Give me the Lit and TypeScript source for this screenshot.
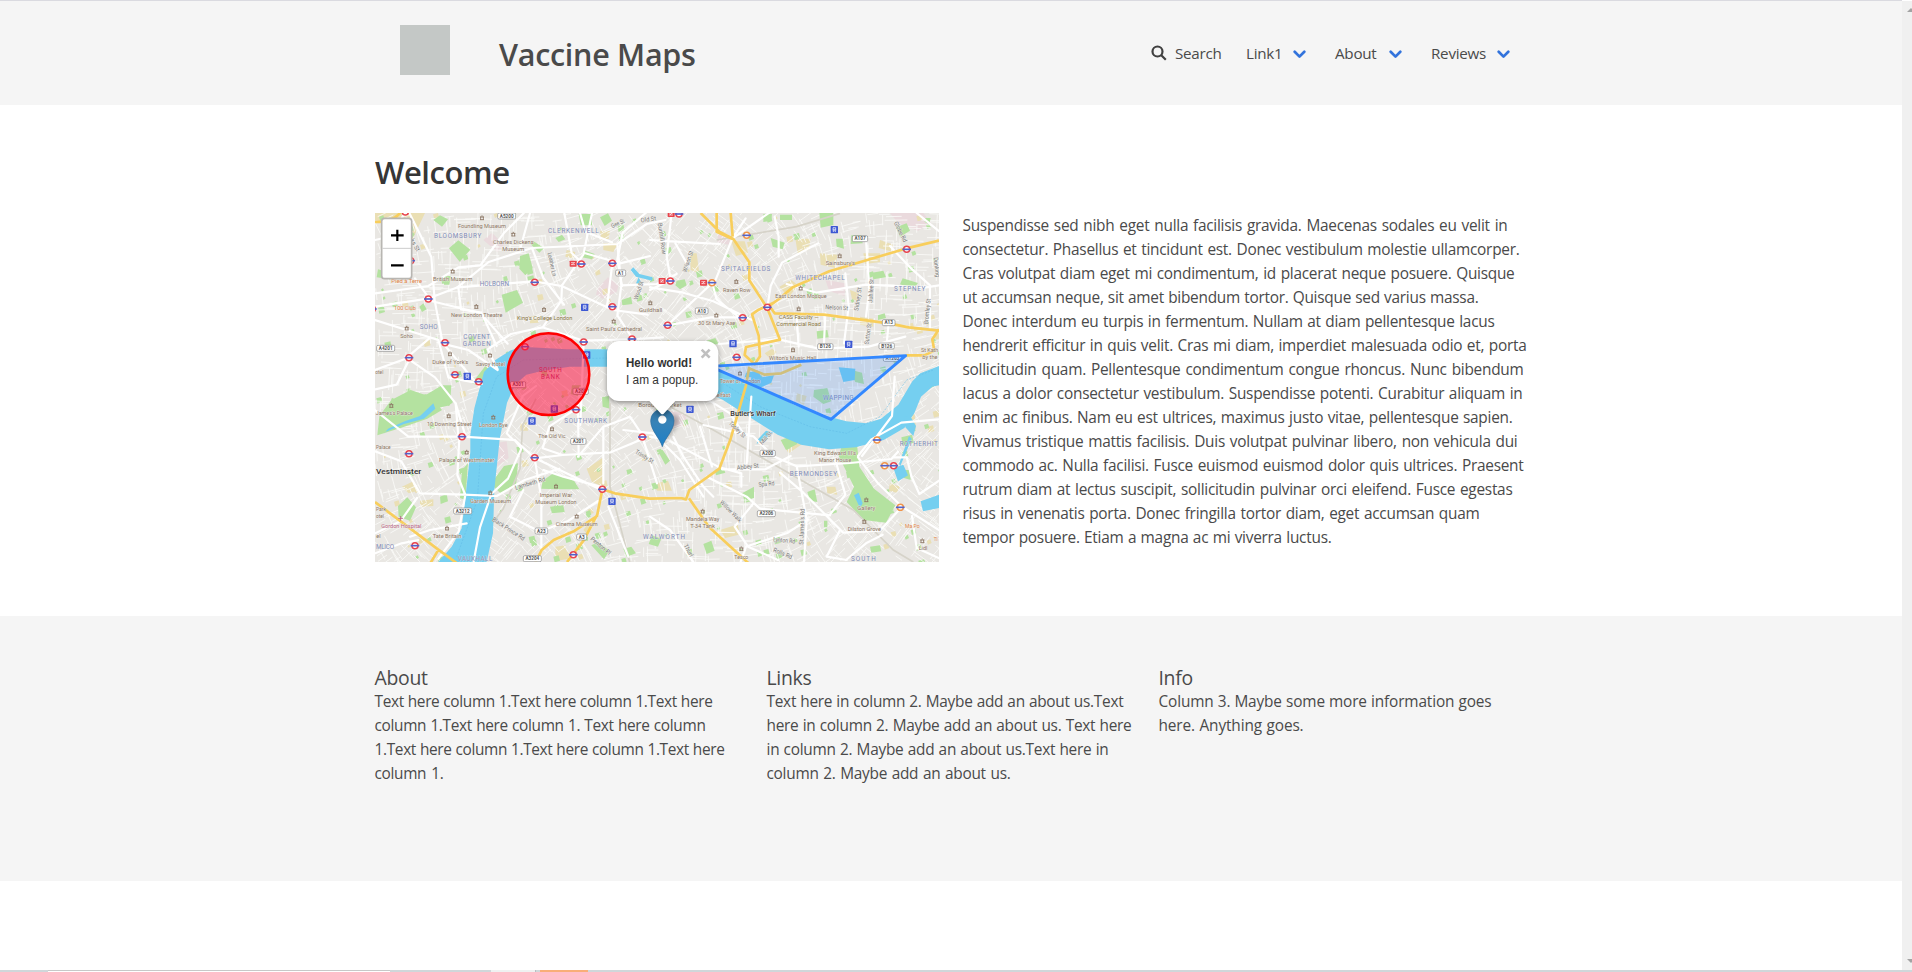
import { LitElement, html, svg, css } from "lit";
import { customElement } from "lit/decorators.js";

type Label = [number, number, string, number, string?, number?];

// Map drawing units: three per CSS pixel. Text entries: centre x, baseline y, text, width, class, angle.
const labels: Label[] = [
  [336, 53, "Foundling Museum", 144], [430, 102, "Charles Dickens", 122], [430, 124, "Museum", 66],
  [248, 214, "British Museum", 118], [320, 320, "New London Theatre", 154], [524, 329, "King's College London", 166, "olive"],
  [732, 364, "Saint Paul's Cathedral", 168], [842, 307, "Guildhall", 70], [110, 384, "Soho", 38],
  [241, 463, "Duke of York's", 108], [361, 467, "Savoy Hotel", 88], [110, 219, "Pied à Terre", 92, "orange"],
  [105, 300, "100 Club", 66, "orange"], [28, 492, "otel", 24],
  [263, 85, "BLOOMSBURY", 142, "area"], [610, 69, "CLERKENWELL", 152, "area"], [373, 227, "HOLBORN", 88, "area"],
  [176, 358, "SOHO", 54, "area"], [320, 386, "COVENT", 80, "area"], [320, 407, "GARDEN", 84, "area"],
  [541, 487, "SOUTH", 68, "area bank"], [541, 508, "BANK", 56, "area bank"],
  [540, 164, "Leather Ln", 72, "street", 78], [812, 243, "Wood St", 56, "street", -72], [746, 46, "Gee St", 42, "street", -24],
  [836, 34, "Old St", 46, "street", -8], [130, 108, "ks St", 40, "street", 60],
  [1127, 184, "SPITALFIELDS", 148, "area"], [1350, 209, "WHITECHAPEL", 148, "area"], [1619, 242, "STEPNEY", 94, "area"],
  [1411, 166, "Sainsbury's", 88], [1100, 245, "Raven Row", 82], [1293, 265, "East London Mosque", 154],
  [1286, 326, "CASS Faculty —", 120, "olive"], [1286, 347, "Commercial Road", 134, "olive"],
  [1040, 345, "30 St Mary Axe", 112], [1268, 450, "Wilton's Music Hall", 142], [1110, 519, "Tower of London", 122],
  [1400, 299, "Nelson St", 68, "street", 3], [1679, 427, "St Kath", 52], [1680, 448, "by the", 46],
  [870, 86, "Bunhill Row", 94, "street", 82], [960, 156, "Wilson St", 66, "street", -72],
  [1470, 268, "Sidney St", 70, "street", -82], [1509, 243, "Jubilee St", 70, "street", -86],
  [1500, 372, "Sutton St", 64, "street", -82], [1586, 68, "Globe Rd", 66, "street", 64],
  [1678, 305, "Bromley St", 78, "street", -84], [1694, 172, "Dunking", 60, "street", 84],
  [73, 616, "James's Palace", 112], [238, 647, "10 Downing Street", 134], [370, 651, "London Eye", 86],
  [546, 685, "The Old Vic", 82], [40, 718, "Palace", 44], [290, 756, "Palace of Westminster", 166],
  [86, 793, "Vestminster", 136, "town"], [558, 861, "Imperial War", 98], [558, 882, "Museum London", 124],
  [362, 879, "Garden Museum", 122], [620, 949, "Cinema Museum", 126], [94, 954, "Gordon Hospital", 120, "rose"],
  [231, 984, "Tate Britain", 86], [33, 903, "Park", 30], [30, 924, "otel", 24], [25, 983, "el", 13],
  [647, 638, "SOUTHWARK", 128, "area"], [45, 1018, "MLICO", 54, "area"], [315, 1052, "VAUXHALL", 104, "area"],
  [882, 987, "WALWORTH", 126, "area"], [482, 826, "Lambeth Rd", 94, "street", -17],
  [412, 962, "Black Prince Rd", 112, "street", 33], [688, 1012, "Penton Pl", 74, "street", 40],
  [820, 745, "Trinity St", 60, "street", 32], [870, 592, "Borough Market", 130],
  [1036, 562, "HMS Belfast", 90], [1149, 617, "Butler's Wharf", 136, "town"], [1405, 570, "WAPPING", 92, "area"],
  [1395, 734, "King Edward III's", 126], [1395, 755, "Manor House", 98], [1330, 798, "BERMONDSEY", 142, "area"],
  [1646, 708, "ROTHERHIT", 114, "area"], [1489, 899, "Gallery", 54], [1483, 964, "Dilston Grove", 100],
  [1627, 954, "Ma Po", 44, "orange"], [1697, 992, "Tl", 12, "orange"], [1659, 1021, "Lidl", 26], [998, 933, "Mandela Way", 100],
  [998, 954, "T-34 Tank", 74], [1114, 1046, "Tesco", 42], [1098, 663, "Tooley St", 62, "street", 44],
  [1192, 688, "Mill St", 46, "street", -48], [1134, 776, "Abbey St", 66, "street", -6], [1190, 828, "Spa Rd", 48, "street", -6],
  [1078, 908, "Willow Walk", 84, "street", 45], [1302, 950, "St James's Rd", 108, "street", -88],
  [1242, 997, "Lynton Rd", 66, "street", 6], [1236, 1036, "Rolls Rd", 60, "street", 22],
  [950, 1024, "Thurl", 40, "street", 62], [1480, 1053, "SOUTH", 74, "area"],
];

const shields: [number, number, string][] = [
  [410, 18, "A5200"], [752, 189, "A1"], [47, 415, "A4201"], [444, 524, "A301"], [632, 544, "A201"], [995, 303, "A10"],
  [1470, 86, "A107"], [1556, 338, "A13"], [1366, 410, "B126"], [1550, 408, "B126"], [1567, 445, "A1203"],
  [625, 694, "A201"], [278, 903, "A3212"], [514, 963, "A23"], [635, 981, "A3"], [487, 1046, "A3204"],
  [1193, 730, "A200"], [1189, 911, "A2206"],
];

const tubes: [number, number][] = [
  [106, 6], [634, 162], [727, 160], [494, 217], [175, 267], [727, 290], [225, 398], [117, 443], [465, 410], [641, 396],
  [786, 387], [255, 494], [326, 515], [122, 152], [7, 297], [927, 12], [901, 213], [893, 346], [1118, 323], [1192, 292], [1100, 442],
  [1610, 118], [276, 680], [117, 731], [618, 599], [817, 681], [494, 743], [697, 838], [135, 1007], [610, 1034], [1571, 767],
];
const overground: [number, number][] = [[1130, 76], [1026, 218], [1521, 690], [1544, 767], [1591, 892]];
const railRed: [number, number][] = [[609, 161], [876, 213], [1000, 218], [903, 12]];
const stops: [number, number][] = [
  [644, 292], [650, 435], [292, 499], [486, 633], [553, 597], [726, 874], [1393, 59], [1089, 401], [1436, 403], [960, 598],
];
const pois: [number, number][] = [
  [336, 24], [430, 73], [248, 184], [319, 290], [522, 299], [731, 334], [841, 279], [110, 355], [240, 432], [360, 436],
  [1099, 215], [1292, 235], [1409, 138], [1286, 297], [1039, 316], [1269, 420], [1110, 490], [64, 587], [236, 618],
  [370, 622], [546, 657], [290, 727], [558, 829], [361, 849], [620, 919], [231, 955], [998, 904], [1114, 1017],
  [1489, 870], [1483, 935], [1657, 993],
];

const parks = [
  "M190 30l20-14 24 12-18 22zM237 115l28-24 36 28-32 36zM118 60l16 12-10 18-14-8z",
  "M450 138l26-8 12 44-22 22-18-20zM488 92l34 22-14 14-24-24zM395 254l46-14 18 38-52 30z",
  "M626 12h40v34h-34zM690 22l24-12 12 22-22 16zM640 120l34 12-8 16-30-6zM148 290l12-10 10 18-14 8zM306 520l40-52 16 14-28 48z",
  "M24 178l40 12-4 18-40-6zM222 198l20 0-4 26-16 0zM755 270l28-10 4 22-30 4zM556 84l20-10 10 14-20 8z",
  "M1230 14h36v16h-36zM1348 9h42v36l-38 8zM1180 12l26 0-2 20-24 4zM1444 76h30l4 24-36 2zM1578 52l32-12 10 22-30 18z",
  "M920 212l24-4 6 18-20 12-14-12zM1506 188l34-6 8 20-38 6zM1598 205l46 14-14 18-40-14zM1340 364l32-4 4 22-34 4zM1398 86l20 0 4 30-22-6z",
  "M1202 84l42 14-6 20-30-8zM1666 24l16 0-4 18-14-6zM1524 316l20-6 4 14-24 6zM1010 392l26-8 10 18-34 4zM1436 478l40 10 6 34-26-6z",
  "M28 618l36-48 58-30 64 22 30 38-44 26-80 28-70 22zM166 556l50-30 28 0-4 60-48 10z",
  "M84 888l28-26 26 30-18 40-34-12zM276 780l18-20-8 110-16-6zM362 822l40-54 42-8-6 68-44 24z",
  "M518 812l34-24 60 24 16 26-66 0-48-2zM606 526l30 0-4 34-30-8zM696 562l20-4 4 38-22-6zM862 720l16 0 22 32-14 12z",
  "M1406 738l14-44 40-2 8 78 44 66 64 50-28 52-66-8-52-54 22-46z",
  "M1332 540l40-6 12 40-24 8-30-22zM1232 690l40-14 10 26-34 18zM1112 852l40-22 0 34-22 6zM1312 846l22-8 8 38-22-4zM1000 1002l24-10 10 30-24 10zM1034 780l26-8 6 16-28 8z",
  "M210 860l20-8 4 22-22 8zM226 546l24 26-14 16-20-18zM664 1006l20-10 34 26-16 26zM760 1016l24-6 14 20-28 10zM640 980l14 0 0 12-12 0zM1594 682l32-8 6 24-34 8zM1600 780l18 0 4 30-20-6z",
  "M846 976l28 10-10 24-28-8zM1190 900l18-6 6 20-20 6zM1362 932l10 0 0 20-10 0zM1500 1010l30-4 4 18-30 4zM540 890l40-4 4 20-38 4z",
];
const sand = [
  "M15 9h150l-40 84-48-54-62-8zM690 62l30 0-4 24-22 4zM700 100h44l-14 26-30-6z",
  "M1084 94l40 0 10 34-36 10zM1276 86h46l-6 34-34 4zM1350 130l52 4-6 40-44-10zM1480 130h50v26l-44 6zM960 130l20 0 8 60-26-10z",
  "M1228 230l36-20 20 16-28 36zM1470 320l40 6 0 24-40-6zM1530 90l40 14-8 20-36-10zM1440 240l26 10 0 22-20-4z",
  "M650 776l50-34 0 88-34-14zM640 960l30-40 6 12-22 42zM96 830l34-16 14 28-28 8zM150 872l40-4 0 20-40 2zM450 642l20-6 4 26-22 0z",
  "M1236 698l40-18 24 20-44 30zM1280 550l30 8-8 26-24-12zM846 822l48-10 12 30-44 0zM1050 960l38-12 18 26-40 10zM1604 620l30-8 4 44-28-4zM1560 820l30 10-10 18-24-6z",
  "M556 1010l30-4 10 40-40 8zM1370 830l26 0 6 24-30-4zM480 320l20-4 6 22-26 2zM590 120l26 6-4 20-26-6zM1184 430l22-14 14 10-20 20z",
];
const pink = [
  "M340 90l26-22 36 36-20 22zM684 232l30-30 32 24-6 20-42 20-20-12zM376 700l34-6 6 50-50 36-8-10z",
  "M1560 9h100l24 30-40 24-60-24zM1366 210l60 10-2 38-46-14zM878 600l64 8 14 36-70 16zM1044 70l40 8-8 26-34-8z",
];

const mainRoads = [
  "M15 90l45-10 44-70M118 9l66 132 10 130 24 128 110 130M15 250l160-22 90-56 66-6 70-96 60-60M135 205l48 68 148 36 82 92M15 290l158-24 90-34 228-18 84 14 154 72 104 14",
  "M262 232l94-76 92-30 32-116M265 232l8 66 60 10M356 156l130-42 256-12 88-60 56-12M486 114l34 90 62 80M576 226l64-92 26-124M646 130l104 30 90-22M742 102l12 124 106-4 60-30M754 226l-12 90 46 70 40 40",
  "M756 228l-14-80 16-80 70-60M15 330l190 60 30 112 100 20M205 398l90 22 88 60M383 478l-30-60 70-46 94-20 124 40 146-4 92-6M334 308l46 100M518 352l56-80 2-46M641 395l-10 250",
  "M105 440l90 62 62 78 30 100M15 480l92-34 70-60M120 444l-40 80-65 14M583 9l22 120 36 34M727 160l-16 130M630 9l16 56 80 32",
  "M840 90l66 4 144 8M906 0l-16 140 12 70-62 30M840 232l100 16 90 26 116 56M1026 218l14 50 70 56M893 345l144-136 50-124 40-60M1088 85l120-84M1214 20l12 60 0 60M893 346l130-24 94 0M916 100l40 70",
  "M1192 292l10-64 34-70 108-58M1250 222l90 26 148-24 180 8 39-6M1560 108l60 64 60 54 0 130M1488 90l10 150-10 80M1426 190l10 100-14 110M1046 402l180-14 120 28 150-6 110-30M1280 320l6 90M1640 9l66 54M1556 340l-8 80M1366 310l-4 90",
  "M257 580l8 100-150 0-100-80M150 850l130 4 100 4 84-48 104-34M276 680l158 10 20 26-40 90-50 46-34 100-20 108M268 685l-6 110 24 60M150 850l-56-96-79-30M286 855l-20 110-60 80M120 980l60-20 110-20",
  "M430 690l-20 -20 48-112 40-30M434 690l60 54 196 94M494 745l20 120 0 150M494 745l84-10 144-8 96-40M578 735l-60-20 20-66 86-56 6-60M624 590l2 150M624 740l76-90 80-30 40 60M700 650l0 170M520 780l60 20 110 30",
  "M15 970l76-36 50-70M15 1030l80-30 50-10M460 840l-40 80 100 50M514 963l80-30 90-60M715 890l60 150M760 660l90 10 80 80 70 110M817 680l44 140",
  "M840 680l54 10 150 80 70 20 0 40M990 650l36 120M1000 560l80 50 40 60M1000 645l150 34 60 60 70 30 160-10 124-12 20-22M1144 560l-14 200M1056 778l130 0 76-40M1010 800l120 60 40 36 210 20",
  "M1280 768l30 160-8 130M1476 738l90-120 8-118M1464 742l60 78 72 70 111 70M1596 890l-66 72-110 6-120-120-70-60M1410 960l-40 80 60 10M1380 914l46-60-30-104M1464 738l40-50 90-50 112-10",
  "M1570 742l40 0 14 56 24 54 59-40M1150 880l-56 70 40 60 90 40M1134 1008l120-40 60-40M840 920l60 40 70 96M1130 1005l-18 50M1626 918l14 96 66 30M1428 1050l60-50 50-26M1030 860l-30-30-60-90-30-60",
];
const yellowRoads = [
  "M15 36q60 0 78-32M992 9l56 56 42 22 48 70 0 54 54 84 38 94-102 22-4 24 30 28 16-24-4-62-20-64 20-14 48-22M1040 9l0 56 48 22M1088 80l-6-71M1192 292q40-26 76-60l110-48 228-68 101-24",
  "M1200 290l14 20 148 4 194 26 60 12 91 10M1707 358l-20 30 6 34-30 14-56 0M1140 476l44 18 50-4 60-26",
  "M1138 470l-10 56-46 160-34 90-90 64-10 28-16-4-92 2-106-16-36-12M957 865l60 86 120 110M697 838l-16 80-70 46-60 26-36 30-20 40M681 915l-40 76-50 65M15 876l186 140 60 44M206 1018l-24 40",
];
const railways = "M840 500l60 90 130 70 420 240 120 120 60 36M320 1056l20-80 60-80 50-120 8-130 40-80M720 580l0 250 60 230M1040 90l240-40 130-40";

// Deterministic residential street mesh.
function mesh(): string {
  let seed = 41;
  const rnd = () => (seed = (seed * 16807) % 2147483647) / 2147483647;
  let d = "";
  for (let gx = 0; gx < 24; gx++) {
    for (let gy = 0; gy < 15; gy++) {
      const turn = -0.45 + Math.sin(gx * 0.35 + gy * 0.25) * 0.5;
      for (let k = 0; k < 7; k++) {
        const x = 15 + (gx + rnd()) * 71;
        const y = 9 + (gy + rnd()) * 71;
        const a = turn + (rnd() > 0.5 ? Math.PI / 2 : 0);
        const n = 20 + rnd() * 50;
        d += `M${x.toFixed(0)} ${y.toFixed(0)}l${(Math.cos(a) * n).toFixed(0)} ${(Math.sin(a) * n).toFixed(0)}`;
      }
    }
  }
  return d;
}

// Small squares and gardens scattered between the streets.
function greens(start: number, count: number): string {
  let seed = start;
  const rnd = () => (seed = (seed * 16807) % 2147483647) / 2147483647;
  let d = "";
  for (let i = 0; i < count; i++) {
    const w = 5 + rnd() * 13;
    d += `M${(15 + rnd() * 1690).toFixed(0)} ${(9 + rnd() * 1045).toFixed(0)}l${w.toFixed(0)} -4l4 ${w.toFixed(0)}l-${w.toFixed(0)} 5z`;
  }
  return d;
}

@customElement("street-map")
class StreetMap extends LitElement {
  static styles = css`
    :host { display: block; width: 564px; height: 349px; overflow: hidden; }
    svg { display: block; width: 564px; height: 349px; }
    .land { fill: #e9e7e3; }
    .mesh { stroke: #fafaf8; stroke-width: 2.8; fill: none; opacity: 0.9; }
    .park { fill: #b4e2a0; }
    .sand { fill: #eadfb4; }
    .pink { fill: #eadadd; }
    .water { fill: #75cff0; }
    .rail { stroke: #d6d3c9; stroke-width: 5; fill: none; }
    .road { stroke: #fff; stroke-width: 6.5; fill: none; stroke-linejoin: round; stroke-linecap: round; }
    .major { stroke: #f8ce5c; stroke-width: 8; fill: none; stroke-linejoin: round; }
    .ferry { stroke: #5fb9e4; stroke-width: 1.5; stroke-dasharray: 6 4; fill: none; }
    text { font-family: Roboto, "Open Sans", sans-serif; font-size: 18.5px; fill: #8b7563; text-anchor: middle; }
    .name { paint-order: stroke; stroke: #f2f0ec; stroke-width: 2px; }
    .area { fill: #808bb8; font-size: 19px; stroke-width: 1px; }
    .bank { fill: #b33f76; stroke: none; }
    .street { fill: #777; }
    .orange { fill: #e08346; }
    .olive { fill: #85733e; }
    .rose { fill: #b65f83; }
    .town { fill: #333; font-size: 24px; font-weight: 500; }
    .shield { fill: #fff; stroke: #888; stroke-width: 2; }
    .num { font-size: 14px; font-weight: 700; fill: #555; }
    .tube { fill: #fff; stroke: #e9444e; stroke-width: 4.5; }
    .over { fill: #fff; stroke: #f0944a; stroke-width: 4.5; }
    .bar { fill: #5463c8; }
    .red { fill: #e8434b; }
    .stop { fill: #3d58d3; }
    .glyph { fill: none; stroke: #fff; stroke-width: 2; }
    .poi { fill: none; stroke: #8a7463; stroke-width: 2.6; }
    .cross { stroke: #b65f83; }
    .tri { fill: #38f; fill-opacity: 0.2; stroke: #3388ff; stroke-width: 8.5; stroke-linejoin: round; }
    .circle { fill: #f03; fill-opacity: 0.5; stroke: #f00; stroke-width: 7.5; }
    .popup { fill: #fff; filter: drop-shadow(0 5px 8px rgba(0, 0, 0, 0.4)); }
    .msg { font-family: "Liberation Sans", Arial, sans-serif; font-size: 36px; fill: #333; text-anchor: start; }
    .strong { font-weight: 700; }
    .close { stroke: #c0c0c0; stroke-width: 8; fill: none; }
    .ctl { fill: #fff; stroke: #b8b6b2; stroke-width: 5; }
    .split { stroke: #ccc; stroke-width: 3; }
    .sign { stroke: #000; stroke-width: 6.5; fill: none; }
  `;

  render() {
    return html`<svg viewBox="15 9 1692 1047" role="img" aria-label="Map">
      <defs>
        <linearGradient id="pin" x1="0" y1="0" x2="0" y2="1">
          <stop offset="0" stop-color="#2e6c97"></stop><stop offset=".35" stop-color="#3883b7"></stop><stop offset="1" stop-color="#1e80c8"></stop>
        </linearGradient>
        <filter id="soft" x="-50%" y="-50%" width="200%" height="200%"><feGaussianBlur stdDeviation="7"></feGaussianBlur></filter>
      </defs>
      <rect class="land" x="15" y="9" width="1692" height="1047"></rect>
      ${sand.map((d) => svg`<path class="sand" d=${d}></path>`)}
      ${pink.map((d) => svg`<path class="pink" d=${d}></path>`)}
      <path class="sand" d=${greens(5501, 90)}></path>
      <path class="park" d=${greens(977, 230)}></path>
      <path class="mesh" d=${mesh()}></path>
      ${parks.map((d) => svg`<path class="park" d=${d}></path>`)}
      <path class="rail" d=${railways}></path>
      <path class="water" d="M205 1056l40-46 30-55 12-100 14-130 0-50 12-80 17-65 12-44 34-36 44-28 32-12 138 8 115 0 170 12 170 46 40 20 100 44 90 46 94 32 60 16 60 6 44-14 52-42 42-70 24-24 56-22 30 0v52l-50 10-34 30-20 50-30 44-62 36-84 22-80 6-84-14-70-30-74-46-90-58-110-52-80-22-120-26-150 0-80 12-50 12-34 30-24 54-22 110-16 152-4 130-20 90-42 84z"></path>
      <path class="water" d="M40 674l14-18 50-22 46-16 40-38 6 16-34 30-60 16-56 24zM790 172l18 20 40 10-2 10-48-12-16-20zM806 202l-8 18 20 6zM1128 488l34-6 14 20 36-6-8 22-34 16-30-10 4-22-20 0zM1604 618l20 6 14 24-8 30-24-26zM1617 678l8 8-34 82-4-6zM1570 774l30-10 14 32-30 18zM1652 874l55-20v40l-48 10zM1452 856l14-8 12 32-8 14zM1210 668l-50 34 4-14 24-26zM1406 472l50 4-2 34-34 6z"></path>
      <path class="ferry" d="M260 1040l62-170 18-260 40-110 80-50 250-6M1060 520l110 70 150 60 110 20 100-50 80-110 80-30"></path>
      ${mainRoads.map((d) => svg`<path class="road" d=${d}></path>`)}
      ${yellowRoads.map((d) => svg`<path class="major" d=${d}></path>`)}
      ${pois.map(([x, y]) => svg`<path class="poi" d=${`M${x - 6} ${y - 3}h12M${x - 6} ${y + 5}h12M${x - 4} ${y - 4}v9M${x + 4} ${y - 4}v9M${x - 2} ${y - 6}h4`}></path>`)}
      <path class="poi cross" d="M92 918v14M85 925h14"></path>
      ${labels.map(
        ([x, y, t, w, c, r]) => svg`<text class=${"name " + (c ?? "")} x=${x} y=${y} textLength=${w} lengthAdjust=${c?.startsWith("area") ? "spacing" : "spacingAndGlyphs"} transform=${`rotate(${r ?? 0} ${x} ${y})`}>${t}</text>`,
      )}
      ${shields.map(([x, y, t]) => {
        const w = t.length * 8 + 14;
        return svg`<rect class="shield" x=${x - w / 2} y=${y - 9} width=${w} height="18" rx="4"></rect><text class="num" x=${x} y=${y + 5}>${t}</text>`;
      })}
      ${tubes.map(([x, y]) => svg`<circle class="tube" cx=${x} cy=${y} r="9"></circle><rect class="bar" x=${x - 13} y=${y - 2.5} width="26" height="5"></rect>`)}
      ${overground.map(([x, y]) => svg`<circle class="over" cx=${x} cy=${y} r="9"></circle><rect class="bar" x=${x - 13} y=${y - 2.5} width="26" height="5"></rect>`)}
      ${railRed.map(([x, y]) => svg`<rect class="red" x=${x - 10} y=${y - 9} width="21" height="18" rx="2"></rect><path class="glyph" d=${`M${x - 6} ${y - 3}h12M${x - 6} ${y + 3}h12M${x - 3} ${y + 3}l6 -6`}></path>`)}
      ${stops.map(([x, y]) => svg`<rect class="stop" x=${x - 11} y=${y - 11} width="22" height="22" rx="2"></rect><path class="glyph" d=${`M${x - 4} ${y - 6}h8v9h-8zM${x - 4} ${y - 1}h8M${x - 4} ${y + 7}l2-3M${x + 4} ${y + 7}l-2-3`}></path>`)}
      <path class="tri" d="M1020 469L1607 437 1383 628z"></path>
      <circle class="circle" cx="535.5" cy="492.5" r="122.5"></circle>
      <path d="M880 706l40-56q16-20 2-32t-34 12z" fill="#000" opacity=".26" filter="url(#soft)"></path>
      <path d="M877 710C871 686 842 662 842 632a35 35 0 0 1 70 0C912 662 883 686 877 710z" fill="url(#pin)" stroke="#2c6d9f" stroke-width="2"></path>
      <circle cx="877" cy="629" r="12.5" fill="#fff"></circle>
      <path class="popup" d="M747 393H1009a36 36 0 0 1 36 36V537a36 36 0 0 1-36 36H916L881 611q-4 4-8 0L838 573H747a36 36 0 0 1-36-36V429a36 36 0 0 1 36-36z"></path>
      <text class="msg strong" x="768" y="472" textLength="198" lengthAdjust="spacingAndGlyphs">Hello world!</text>
      <text class="msg" x="768" y="522" textLength="217" lengthAdjust="spacingAndGlyphs">I am a popup.</text>
      <path class="close" d="M995 419l24 24M1019 419l-24 24"></path>
      <rect class="ctl" x="35" y="25" width="90" height="181" rx="9"></rect>
      <path class="split" d="M37 115h86"></path>
      <path class="sign" d="M63 76h38M82 59v34M63 166h38"></path>
    </svg>`;
  }
}

// Each line of copy with its width in pixels.
type Line = [string, number];
const intro: Line[] = [
  ["Suspendisse sed nibh eget nulla facilisis gravida. Maecenas sodales eu velit in", 545],
  ["consectetur. Phasellus et tincidunt est. Donec vestibulum molestie ullamcorper.", 557],
  ["Cras volutpat diam eget mi condimentum, id placerat neque posuere. Quisque", 552],
  ["ut accumsan neque, sit amet bibendum tortor. Quisque sed varius massa.", 516],
  ["Donec interdum eu turpis in fermentum. Nullam at diam pellentesque lacus", 532],
  ["hendrerit efficitur in quis velit. Cras mi diam, imperdiet malesuada odio et, porta", 564],
  ["sollicitudin quam. Pellentesque condimentum congue rhoncus. Nunc bibendum", 561],
  ["lacus a dolor consectetur vestibulum. Suspendisse potenti. Curabitur aliquam in", 560],
  ["enim ac finibus. Nam eu est ultrices, maximus justo vitae, pellentesque sapien.", 550],
  ["Vivamus tristique mattis facilisis. Duis volutpat pulvinar libero, non vehicula dui", 555],
  ["commodo ac. Nulla facilisi. Fusce euismod euismod dolor quis ultrices. Praesent", 561],
  ["rutrum diam at lectus suscipit, sollicitudin pulvinar orci eleifend. Fusce egestas", 550],
  ["risus in venenatis porta. Donec fringilla tortor diam, eget accumsan quam", 517],
  ["tempor posuere. Etiam a magna ac mi viverra luctus.", 369],
];
const columns: { title: string; lines: Line[] }[] = [
  { title: "About", lines: [
    ["Text here column 1.Text here column 1.Text here", 338], ["column 1.Text here column 1. Text here column", 331],
    ["1.Text here column 1.Text here column 1.Text here", 350], ["column 1.", 69]] },
  { title: "Links", lines: [
    ["Text here in column 2. Maybe add an about us.Text", 357], ["here in column 2. Maybe add an about us. Text here", 365],
    ["in column 2. Maybe add an about us.Text here in", 342], ["column 2. Maybe add an about us.", 244]] },
  { title: "Info", lines: [["Column 3. Maybe some more information goes", 333], ["here. Anything goes.", 145]] },
];
const menu: [string, number][] = [["Link1", 36], ["About", 43], ["Reviews", 55]];

@customElement("app-root")
class AppRoot extends LitElement {
  static styles = css`
    :host { display: flex; width: 1912px; height: 972px; overflow: hidden; position: relative; background: #fff; color: #4a4a4a;
      font: 15.4px/24px "Open Sans", "Noto Sans", sans-serif; }
    .page { width: 1902px; height: 970px; display: flex; flex-direction: column; }
    .top { height: 104px; border-top: 1px solid #dadae0; background: #f5f5f5; display: flex; padding-left: 400px; box-sizing: content-box; }
    .logo { width: 50px; height: 50px; background: #c4c8c6; margin-top: 24px; }
    h1 { margin: 35px 0 0 49px; width: 197px; font-size: 30.5px; line-height: 36px; font-weight: 600; white-space: nowrap; letter-spacing: -0.28px; }
    nav { display: flex; align-items: center; height: 24px; margin: 40px 0 0 455px; font-size: 15.2px; color: #4a4a4a; }
    .mag { width: 16px; height: 16px; margin-right: 8px; }
    .find { width: 47px; margin-right: 24px; }
    .item { display: flex; align-items: center; margin-right: 29px; }
    .item svg { width: 13px; height: 9px; margin-left: 11px; margin-top: 2px; }
    .word { white-space: nowrap; letter-spacing: -0.25px; }
    main { padding: 48px 0 0 375px; height: 463px; }
    h2 { margin: 2px 0 24px; font-size: 31px; line-height: 34px; height: 34px; font-weight: 600; color: #363636; letter-spacing: -0.4px; }
    .row { display: flex; gap: 23.5px; }
    .copy { padding-top: 1px; }
    .line { display: block; height: 24px; white-space: nowrap; text-align: justify; text-align-last: justify; letter-spacing: -0.26px; }
    footer { background: #f5f5f5; height: 217px; padding: 48px 0 0 374.5px; display: grid; grid-template-columns: 392px 392px 1fr; }
    h3 { margin: 3px 0 1px; font-size: 19.4px; line-height: 22px; height: 22px; font-weight: 400; letter-spacing: -0.3px; }
    section:first-child .line { letter-spacing: -0.33px; }
    section:last-child .line { letter-spacing: -0.14px; }
    .scroll { width: 10px; height: 969px; margin-top: 1px; background: #f0f0f0; display: flex; flex-direction: column; justify-content: space-between; align-items: flex-end; }
    .scroll svg { width: 5px; height: 4px; margin: 7px 0; }
    .edge { position: absolute; left: 0; top: 970px; width: 1912px; height: 2px; background: #d0d7da; display: flex; }
    .field { margin-left: 48px; width: 342px; height: 1px; border-top: 1px solid #c8c8c8; background: #fff; }
    .tab { margin-left: 101px; width: 44px; background: #eff1f1; border-right: 1px solid #b8bfc2; }
    .hot { margin-left: 4px; width: 48px; background: #f9ae78; }
  `;

  private line([text, width]: Line) {
    return html`<span class="line" style="width:${width}px">${text}</span>`;
  }

  render() {
    return html`
      <div class="page">
        <header class="top">
          <div class="logo"></div>
          <h1>Vaccine Maps</h1>
          <nav>
            <svg class="mag" viewBox="0 0 16 16" fill="none" stroke="#404040" stroke-width="2.2"><circle cx="6.5" cy="6.5" r="5"></circle><path d="M10 10l4.8 4.8"></path></svg>
            <span class="word find">Search</span>
            ${menu.map(([name, width]) => html`<span class="item"><span class="word" style="width:${width}px">${name}</span>
              <svg viewBox="0 0 13 9" fill="none" stroke="#3273dc" stroke-width="2.7" stroke-linecap="round" stroke-linejoin="round"><path d="M1.7 1.8l4.8 4.8 4.8-4.8"></path></svg></span>`)}
          </nav>
        </header>
        <main>
          <h2>Welcome</h2>
          <div class="row">
            <street-map></street-map>
            <div class="copy">${intro.map((l) => this.line(l))}</div>
          </div>
        </main>
        <footer>
          ${columns.map((c) => html`<section><h3>${c.title}</h3>${c.lines.map((l) => this.line(l))}</section>`)}
        </footer>
      </div>
      <div class="scroll">
        <svg viewBox="0 0 5 4"><path d="M0 4L4 0l4 4z" fill="#a3a3a3"></path></svg>
        <svg viewBox="0 0 5 4"><path d="M0 0l4 4 4-4z" fill="#a3a3a3"></path></svg>
      </div>
      <div class="edge"><div class="field"></div><div class="tab"></div><div class="hot"></div></div>
    `;
  }
}
